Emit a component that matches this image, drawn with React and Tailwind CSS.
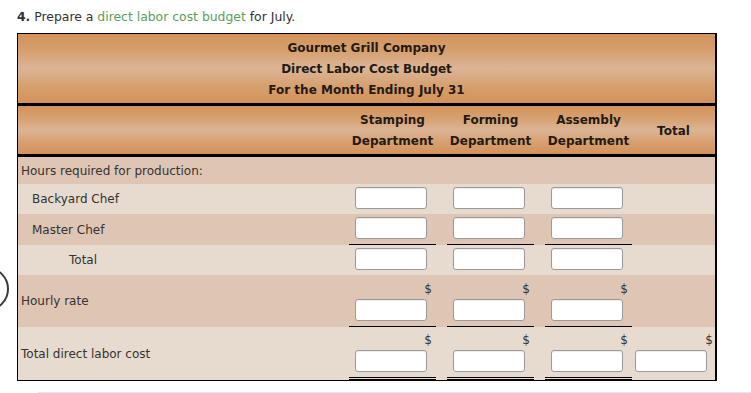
import React from 'react';

const font = { fontFamily: '"DejaVu Sans", Verdana, sans-serif' };

const Box = () => (
    <div className="w-[72px] h-[22px] bg-white border border-[#9a9a9a] rounded-[3px] shadow-[inset_0_1px_1px_rgba(0,0,0,0.08)]" />
);

const Gap = () => <div className="w-[11px]" />;

const Row = ({ label, indent, bg, h, pt, pb, line, dollar, double, total }) => (
    <div className={'flex ' + bg + ' ' + h}>
        <div className={'w-[331px] flex items-center text-[12px] text-[#333] ' + indent}>{label}</div>
        {[0, 1, 2].map((i) => (
            <React.Fragment key={i}>
                {i > 0 && <Gap />}
                {pt !== undefined ? (
                    <div className={'w-[87px] flex flex-col ' + pt + ' ' + pb + (line ? ' border-b border-black' : '') + (double ? ' border-b-[3px] border-double border-black' : '')}>
                        <div className="pl-[6px] pr-[4px]">
                            {dollar && <div className="text-right text-[12px] leading-[16px] text-[#333] mb-[2px]">$</div>}
                            <Box />
                        </div>
                    </div>
                ) : (
                    <div className="w-[87px]" />
                )}
            </React.Fragment>
        ))}
        <div className={'flex-1 flex flex-col pl-[3px] pr-[2px] ' + (total ? pt + ' ' + pb : '')}>
            {total && (
                <>
                    <div className="text-right text-[12px] leading-[16px] text-[#333] mb-[2px]">$</div>
                    <Box />
                </>
            )}
        </div>
    </div>
);

const grad = 'bg-[linear-gradient(to_bottom,#d4925a_0%,#d7a06f_25%,#dbb597_50%,#d7a06f_75%,#d4925a_100%)]';

export default function App() {
    return (
        <div className="relative w-[751px] h-[393px] bg-white overflow-hidden" style={font}>
            <svg className="absolute left-0 top-[264px]" width="10" height="52">
                <circle cx="-13" cy="25" r="21" fill="none" stroke="#3a3a3a" strokeWidth="2" />
            </svg>
            <div className="pt-[9px] pl-[17px] text-[12.4px] leading-[15px] text-[#333]">
                <b>4.</b> Prepare a <span className="text-[#5a9e5a]">direct labor cost budget</span> for July.
            </div>
            <div className="mt-[9px] ml-[17px] w-[700px] border-t border-l border-b border-r-2 border-black">
                <div className={grad + ' h-[72px] pt-[2px] border-b-[3px] border-black flex flex-col items-center justify-center text-[12px] leading-[21px] font-bold text-[#231a14]'}>
                    <div>Gourmet Grill Company</div>
                    <div>Direct Labor Cost Budget</div>
                    <div>For the Month Ending July 31</div>
                </div>
                <div className={grad + ' h-[51px] pt-[2px] border-b-[3px] border-black flex text-[12px] leading-[21px] font-bold text-[#231a14]'}>
                    <div className="w-[331px]" />
                    <div className="w-[87px] flex flex-col items-center justify-center whitespace-nowrap"><div>Stamping</div><div>Department</div></div>
                    <Gap />
                    <div className="w-[87px] flex flex-col items-center justify-center whitespace-nowrap"><div>Forming</div><div>Department</div></div>
                    <Gap />
                    <div className="w-[87px] flex flex-col items-center justify-center whitespace-nowrap"><div>Assembly</div><div>Department</div></div>
                    <div className="flex-1 flex items-center justify-center">Total</div>
                </div>
                <Row label="Hours required for production:" indent="pl-[3px]" bg="bg-[#dfc6b4]" h="h-[27px]" />
                <Row label="Backyard Chef" indent="pl-[14px]" bg="bg-[#e7dbcf]" h="h-[30px]" pt="pt-[3px]" pb="pb-[5px]" />
                <Row label="Master Chef" indent="pl-[14px]" bg="bg-[#dfc6b4]" h="h-[31px]" pt="pt-[3px]" pb="pb-[5px]" line />
                <Row label="Total" indent="pl-[51px]" bg="bg-[#e7dbcf]" h="h-[30px]" pt="pt-[3px]" pb="pb-[5px]" />
                <Row label="Hourly rate" indent="pl-[3px]" bg="bg-[#dfc6b4]" h="h-[52px]" pt="pt-[6px]" pb="pb-[5px]" line dollar />
                <Row label="Total direct labor cost" indent="pl-[3px]" bg="bg-[#e7dbcf]" h="h-[53px]" pt="pt-[5px]" pb="pb-[4px]" double dollar total />
            </div>
            <div className="mt-[11px] ml-[38px] h-px bg-[#e3e8eb]" />
        </div>
    );
}
